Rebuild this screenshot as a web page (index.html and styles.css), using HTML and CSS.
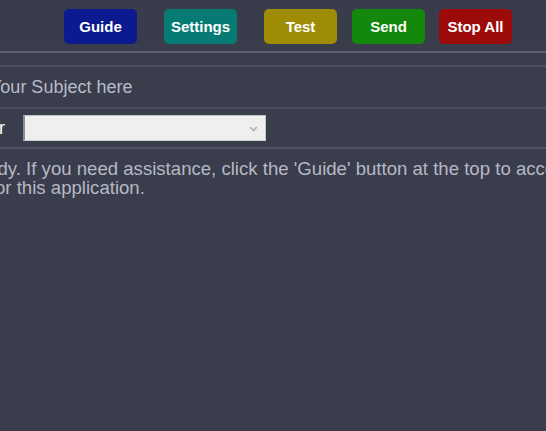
FILE: index.html
```html
<!DOCTYPE html>
<html lang="en">
<head>
<meta charset="utf-8">
<title>Mailer</title>
<link rel="stylesheet" href="styles.css">
</head>
<body>
  <header class="toolbar">
    <button class="btn btn-guide">Guide</button>
    <button class="btn btn-settings">Settings</button>
    <button class="btn btn-test">Test</button>
    <button class="btn btn-send">Send</button>
    <button class="btn btn-stop">Stop All</button>
  </header>
  <main class="form">
    <div class="rule"></div>
    <div class="subject">Your Subject here</div>
    <div class="select-row">
      <label class="select-label">r</label>
      <div class="select">
        <svg class="chev" width="9" height="6" viewBox="0 0 9 6"><path d="M1 1l3.5 3.5L8 1" fill="none" stroke="#b3b3b3" stroke-width="1.6"/></svg>
      </div>
    </div>
    <p class="body-text">dy. If you need assistance, click the 'Guide' button at the top to access the documentation<br>or this application.</p>
  </main>
</body>
</html>
```

FILE: styles.css
```css
html, body {
  margin: 0;
  padding: 0;
}
body {
  background: #3a3d4b;
  font-family: "Liberation Sans", Arial, sans-serif;
  overflow: hidden;
  width: 546px;
  height: 431px;
}
.toolbar {
  display: flex;
  align-items: flex-start;
  height: 45px;
  padding: 9px 0 0 64px;
  box-sizing: border-box;
  background: #393c4b;
}
.btn {
  width: 73px;
  height: 35px;
  border: none;
  border-radius: 5px;
  color: #fff;
  font-family: "Liberation Sans", Arial, sans-serif;
  font-weight: bold;
  font-size: 15px;
  padding: 0;
}
.btn-guide { background: #0b1a8e; }
.btn-settings { background: #067b74; margin-left: 27px; }
.btn-test { background: #9f8c06; margin-left: 27px; }
.btn-send { background: #13880b; margin-left: 15px; }
.btn-stop { background: #9c0a0a; margin-left: 14px; }

.form {
  padding-top: 6px;
}
.rule {
  height: 2px;
  background: #5f616d;
}
.subject {
  margin-top: 12px;
  border-top: 2px solid #4b4e5b;
  border-bottom: 2px solid #4b4e5b;
  height: 40px;
  line-height: 40px;
  font-size: 18px;
  color: #b7bbc7;
  text-indent: -10px;
  white-space: nowrap;
}
.select-row {
  display: flex;
  align-items: center;
  height: 38px;
  border-bottom: 2px solid #50535f;
}
.select-label {
  width: 23px;
  color: #fff;
  font-size: 18px;
  text-indent: -1px;
}
.select {
  position: relative;
  width: 240px;
  height: 24px;
  background: #efefef;
  border-top: 1px solid #c4c4c4;
  border-left: 2px solid #8d8d92;
  border-right: 1px solid #c8c8c8;
  border-bottom: 1px solid #d0d0d0;
}
.chev {
  position: absolute;
  right: 7px;
  top: 10px;
}
.body-text {
  margin: 10px 0 0 -5px;
  text-indent: 2.5px;
  font-size: 18.6px;
  line-height: 19px;
  color: #b5b9c5;
  white-space: nowrap;
}
```
